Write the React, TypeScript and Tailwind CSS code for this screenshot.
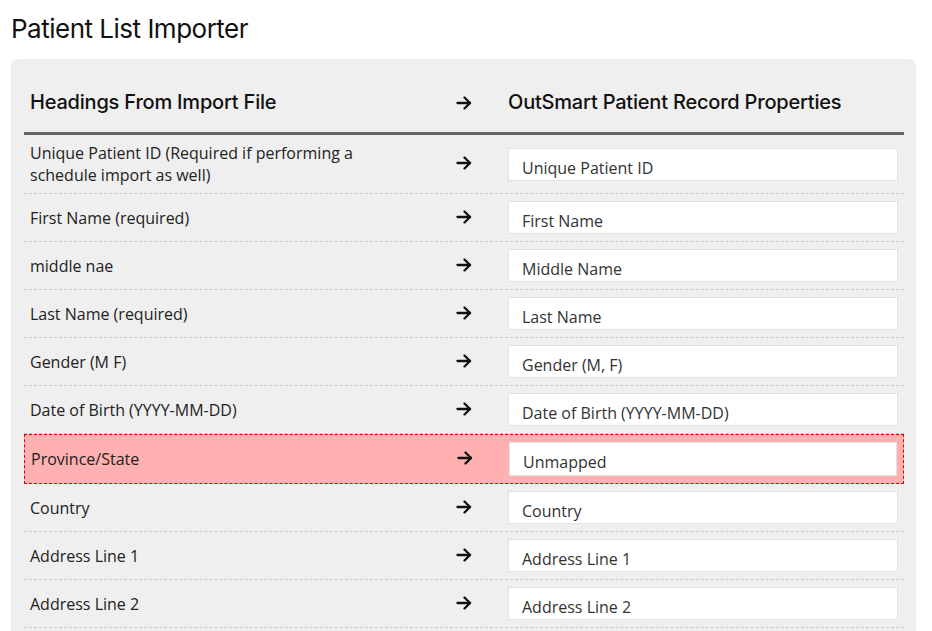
const rows: { source: string; target: string; error?: boolean }[] = [
  { source: 'Unique Patient ID (Required if performing a schedule import as well)', target: 'Unique Patient ID' },
  { source: 'First Name (required)', target: 'First Name' },
  { source: 'middle nae', target: 'Middle Name' },
  { source: 'Last Name (required)', target: 'Last Name' },
  { source: 'Gender (M F)', target: 'Gender (M, F)' },
  { source: 'Date of Birth (YYYY-MM-DD)', target: 'Date of Birth (YYYY-MM-DD)' },
  { source: 'Province/State', target: 'Unmapped', error: true },
  { source: 'Country', target: 'Country' },
  { source: 'Address Line 1', target: 'Address Line 1' },
  { source: 'Address Line 2', target: 'Address Line 2' },
];

function Arrow() {
  return (
    <svg width="16" height="14" viewBox="0 0 16 14" fill="none" stroke="#111" strokeWidth="2.3" strokeLinecap="round" strokeLinejoin="round">
      <path d="M1.5 7h12.5" />
      <path d="M8.5 1.5 14 7l-5.5 5.5" />
    </svg>
  );
}

export default function App() {
  return (
    <main className="min-h-screen bg-white font-['Open_Sans',sans-serif] text-[#222]">
      <h1 className="pl-[11px] pt-[12px] pb-[13px] font-['Inter',sans-serif] text-[26px] leading-[34px] tracking-[-0.5px] text-[#111]">
        Patient List Importer
      </h1>

      <div className="ml-[11px] mr-[16px] rounded-[7px] bg-[#efefef] pl-[13px] pr-[12px] pt-[13px] pb-4">
        {/* header */}
        <div className="flex h-[63px] items-center border-b-[3px] border-[#666] font-['Inter',sans-serif] text-[20px] font-medium tracking-[-0.2px] text-[#111]">
          <div className="w-[416px] pl-[6px]">Headings From Import File</div>
          <div className="w-[62px] pl-[16px] pt-[1px]"><Arrow /></div>
          <div className="flex-1 px-[6px]">OutSmart Patient Record Properties</div>
        </div>

        {rows.map((r, i) => (
          <div
            key={i}
            className={
              r.error
                ? 'flex items-center border border-dashed border-[#e00000] bg-[#ffb0b0] py-[7px]'
                : 'flex items-center border-b border-dashed border-[#c8c8c8] py-[7px]'
            }
          >
            <div className="w-[416px] pl-[6px] pr-[44px] text-[16px] leading-[22px]">{r.source}</div>
            <div className="w-[62px] pl-[16px] pb-[2px]"><Arrow /></div>
            <div className="flex-1 px-[6px]">
              <div
                className={
                  (r.error ? 'h-[34px]' : 'h-[33px]') +
                  ' border border-[#e2e2e2] bg-white pl-[13px] pt-[7px] text-[16px] leading-6 text-[#333]'
                }
              >
                {r.target}
              </div>
            </div>
          </div>
        ))}
      </div>
    </main>
  );
}
